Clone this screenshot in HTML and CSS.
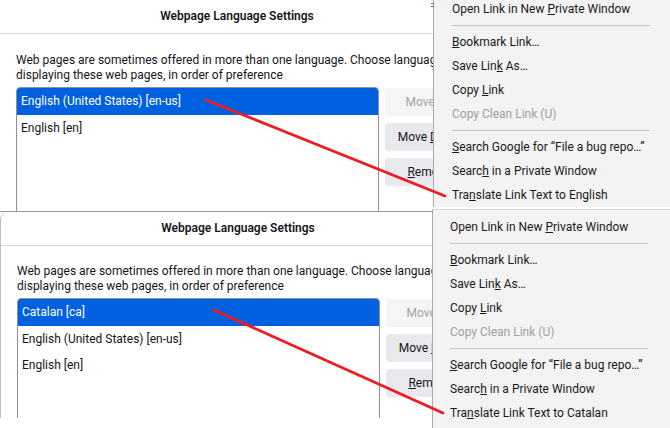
FILE: index.html
```html
<!DOCTYPE html>
<html lang="en">
<head>
<meta charset="utf-8">
<title>Webpage Language Settings</title>
<link rel="stylesheet" href="styles.css">
</head>
<body>
<div class="canvas">
  <section class="shot shot-a">
    <div class="dialog dialog-a">
      <div class="window">
        <header class="titlebar">Webpage Language Settings</header>
        <div class="content">
          <p class="desc">Web pages are sometimes offered in more than one language. Choose languages for<br>displaying these web pages, in order of preference</p>
          <div class="pane">
            <ul class="listbox">
              <li class="row selected">English (United States) [en-us]</li>
              <li class="row">English [en]</li>
            </ul>
            <div class="buttons">
              <button class="btn" disabled>Move <u>U</u>p</button>
              <button class="btn">Move <u>D</u>own</button>
              <button class="btn"><u>R</u>emove</button>
            </div>
          </div>
        </div>
      </div>
    </div>
    <nav class="menu menu-a">
      <div class="item">Open Link in New <u>P</u>rivate Window</div>
      <div class="sep"></div>
      <div class="item"><u>B</u>ookmark Link…</div>
      <div class="item">Save Lin<u>k</u> As…</div>
      <div class="item">Copy <u>L</u>ink</div>
      <div class="item disabled">Copy Clean Link (U)</div>
      <div class="sep"></div>
      <div class="item"><u>S</u>earch Google for “File a bug repo…”</div>
      <div class="item">Searc<u>h</u> in a Private Window</div>
      <div class="item">Tra<u>n</u>slate Link Text to English</div>
    </nav>
    <span class="mark"></span>
  </section>

  <section class="shot shot-b">
    <div class="dialog dialog-b">
      <div class="window">
        <header class="titlebar">Webpage Language Settings</header>
        <div class="content">
          <p class="desc">Web pages are sometimes offered in more than one language. Choose languages for<br>displaying these web pages, in order of preference</p>
          <div class="pane">
            <ul class="listbox">
              <li class="row selected">Catalan [ca]</li>
              <li class="row">English (United States) [en-us]</li>
              <li class="row">English [en]</li>
            </ul>
            <div class="buttons">
              <button class="btn" disabled>Move <u>U</u>p</button>
              <button class="btn">Move <u>D</u>own</button>
              <button class="btn"><u>R</u>emove</button>
            </div>
          </div>
        </div>
      </div>
    </div>
    <nav class="menu menu-b">
      <div class="item">Open Link in New <u>P</u>rivate Window</div>
      <div class="sep"></div>
      <div class="item"><u>B</u>ookmark Link…</div>
      <div class="item">Save Lin<u>k</u> As…</div>
      <div class="item">Copy <u>L</u>ink</div>
      <div class="item disabled">Copy Clean Link (U)</div>
      <div class="sep"></div>
      <div class="item"><u>S</u>earch Google for “File a bug repo…”</div>
      <div class="item">Searc<u>h</u> in a Private Window</div>
      <div class="item">Tra<u>n</u>slate Link Text to Catalan</div>
    </nav>
  </section>

  <svg class="arrows" width="670" height="428" viewBox="0 0 670 428" aria-hidden="true">
    <line x1="206" y1="100" x2="445" y2="196" />
    <line x1="214" y1="310" x2="443" y2="413" />
  </svg>
</div>
</body>
</html>
```
FILE: styles.css
```css
* { box-sizing: border-box; }

html, body {
  margin: 0;
  padding: 0;
  background: #ffffff;
}

body {
  font-family: Roboto, "Noto Sans", sans-serif;
  font-size: 12px;
  color: #15141a;
}

.canvas {
  position: relative;
  width: 670px;
  height: 428px;
  overflow: hidden;
  background: #ffffff;
}

.shot {
  display: flex;
  align-items: flex-start;
  position: relative;
}

.shot-a { height: 212px; }
.shot-b { height: 216px; }

/* ---------- dialog ---------- */
.dialog {
  flex: none;
  overflow: hidden;
  background: #ffffff;
}

.dialog-a {
  width: 433px;
  height: 212px;
  border-bottom: 1px solid #9a9a9a;
}

.dialog-b {
  width: 432px;
  height: 206px;
  border-left: 1px solid #bdbdbd;
  border-top-left-radius: 8px;
}

.window {
  width: 474px;
}

.titlebar {
  height: 34px;
  line-height: 33px;
  border-bottom: 1px solid #d4d4d8;
  text-align: center;
  font-weight: 600;
}

.content {
  padding: 19px 0 0 16px;
}

.dialog-b .content { padding-top: 18px; }

.desc {
  margin: 0 0 4px;
  line-height: 15px;
  white-space: nowrap;
}

.pane {
  display: flex;
  align-items: flex-start;
  gap: 6px;
}

.listbox {
  list-style: none;
  margin: 0;
  padding: 0;
  width: 363px;
  height: 160px;
  border: 1px solid #8f8f9d;
  border-radius: 4px;
  overflow: hidden;
}

.row {
  height: 26.5px;
  line-height: 26.5px;
  padding-left: 4px;
  white-space: nowrap;
}

.row.selected {
  background: #0061e0;
  color: #ffffff;
}

.buttons {
  display: flex;
  flex-direction: column;
  gap: 7px;
  margin-top: 1px;
}

.btn {
  width: 88px;
  height: 28px;
  padding: 0;
  border: none;
  border-radius: 4px;
  background: #e9e9ed;
  color: #15141a;
  font: inherit;
  text-align: center;
  white-space: nowrap;
}

.btn:disabled {
  background: #f5f5f7;
  color: #a3a3a8;
}

/* ---------- context menu ---------- */
.menu {
  flex: 1;
  align-self: flex-start;
  background: #f3f3f3;
  color: #1a1a1a;
}

.menu-a {
  margin-top: -3px;
  border-left: 1px solid #a9a9a9;
  padding-left: 18px;
  padding-right: 20px;
}

.menu-b {
  margin-top: -3px;
  border-top: 1px solid #d6d6d6;
  border-left: 1px solid #a9a9a9;
  padding: 5px 22px 4px 17px;
}

.item {
  height: 24px;
  line-height: 24px;
  white-space: nowrap;
}

.item.disabled {
  color: #a0a0a0;
}

.sep {
  height: 1px;
  margin: 4px 0;
  background: #c6c6c6;
}

/* small purple window-edge mark */
.mark {
  position: absolute;
  left: 431px;
  top: 3px;
  width: 3px;
  height: 4px;
  border-top: 1px solid #b040e0;
  border-bottom: 1px solid #b040e0;
}

/* ---------- annotation arrows ---------- */
.arrows {
  position: absolute;
  left: 0;
  top: 0;
  pointer-events: none;
}

.arrows line {
  stroke: #ec1c24;
  stroke-width: 2.8;
  stroke-linecap: round;
}
```
